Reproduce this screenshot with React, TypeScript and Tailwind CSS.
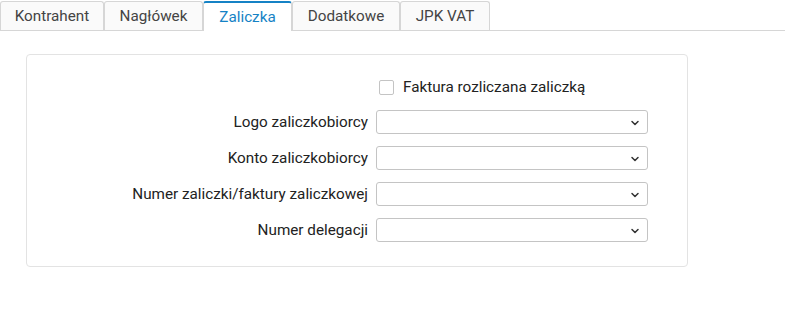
import { ChevronDown } from 'lucide-react';

const tabs = [
  { name: 'Kontrahent', w: 'w-[104px]' },
  { name: 'Nagłówek', w: 'w-[99px]' },
  { name: 'Zaliczka', w: 'w-[89px]' },
  { name: 'Dodatkowe', w: 'w-[108px]' },
  { name: 'JPK VAT', w: 'w-[90px]' },
];

const fields = [
  'Logo zaliczkobiorcy',
  'Konto zaliczkobiorcy',
  'Numer zaliczki/faktury zaliczkowej',
  'Numer delegacji',
];

function Select() {
  return (
    <div className="relative h-[24px] w-[272px] rounded-[3px] border border-[#c4c4c4] bg-white">
      <ChevronDown size={12} strokeWidth={3} className="absolute right-[6px] top-[6px] text-[#333]" />
    </div>
  );
}

export default function App() {
  return (
    <div className="h-[329px] w-[785px] bg-white font-['Roboto',sans-serif] text-[15.25px] text-[#333]">
      {/* zakładki */}
      <div className="flex h-[31px] items-end border-b border-[#d6d6d6] pt-[1px]">
        {tabs.map((tab) => {
          const active = tab.name === 'Zaliczka';
          return (
            <div
              key={tab.name}
              className={`${tab.w} ${
                active
                  ? 'relative -mb-[1px] flex h-[30px] items-center justify-center rounded-t-[3px] border-x border-t-2 border-[#d6d6d6] border-t-[#1582c5] bg-white text-[#1582c5]'
                  : 'flex h-[29px] items-center justify-center rounded-t-[3px] border-x border-t border-[#d6d6d6] bg-[#fafafa] text-[#444]'
              }`}
            >
              {tab.name}
            </div>
          );
        })}
      </div>

      {/* panel */}
      <div className="ml-[26px] mt-[23px] h-[213px] w-[662px] rounded-[4px] border border-[#e3e3e3] pt-[21px]">
        <div className="flex h-[22px] items-center pl-[352px]">
          <div className="h-[15px] w-[15px] rounded-[2px] border border-[#c4c4c4] bg-white" />
          <span className="ml-[9px] text-[#222]">Faktura rozliczana zaliczką</span>
        </div>
        <div className="mt-[12px] flex flex-col gap-[12px]">
          {fields.map((f) => (
            <div key={f} className="flex items-center">
              <div className="w-[349px] pr-[8px] text-right text-[#222]">{f}</div>
              <Select />
            </div>
          ))}
        </div>
      </div>
    </div>
  );
}
